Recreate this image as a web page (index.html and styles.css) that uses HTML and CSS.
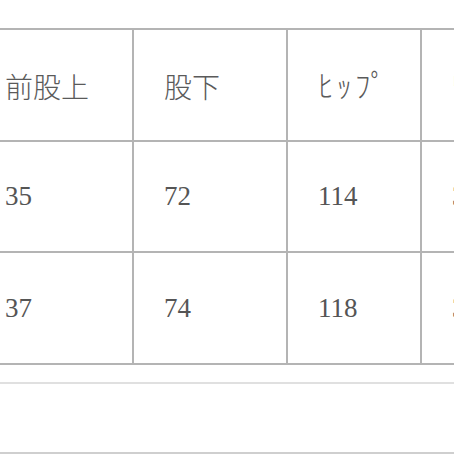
FILE: index.html
```html
<!DOCTYPE html>
<html lang="ja">
<head>
<meta charset="utf-8">
<link rel="stylesheet" href="styles.css">
</head>
<body>
<div class="page">
  <div class="grid">
    <div class="cell head">前股上</div>
    <div class="cell head">股下</div>
    <div class="cell head kana">ﾋｯﾌﾟ</div>
    <div class="cell head kana">ﾜﾀﾘ</div>
    <div class="cell num">35</div>
    <div class="cell num">72</div>
    <div class="cell num">114</div>
    <div class="cell num">33</div>
    <div class="cell num">37</div>
    <div class="cell num">74</div>
    <div class="cell num">118</div>
    <div class="cell num">34</div>
  </div>
  <div class="divider"></div>
  <div class="footer"></div>
</div>
</body>
</html>
```
FILE: styles.css
```css
html, body {
  margin: 0;
  padding: 0;
  background: #fff;
  overflow: hidden;
  width: 454px;
  height: 454px;
}
.page {
  padding-top: 28px;
  width: 454px;
  height: 454px;
  box-sizing: border-box;
  display: flex;
  flex-direction: column;
}
.grid {
  margin-left: -27px;
  width: 616px;
  box-sizing: border-box;
  display: grid;
  grid-template-columns: 157px 152px 132px 160px;
  grid-template-rows: 110px 109px 110px;
  gap: 2px;
  padding: 2px;
  background: #b4b4b4;
}
.cell {
  background: #fff;
  display: flex;
  align-items: center;
  padding-left: 30px;
  color: #5a5a5a;
}
.head {
  font-family: "Noto Sans CJK JP", sans-serif;
  font-weight: 300;
  font-size: 28px;
  padding-top: 1px;
}
.kana {
  font-size: 31px;
  letter-spacing: 3px;
  padding-bottom: 4px;
}
.num {
  font-family: "Liberation Serif", serif;
  font-size: 27px;
  color: #555;
}
.divider {
  margin-top: 17px;
  height: 2px;
  background: #e0e0e0;
}
.footer {
  flex: 1;
  border-bottom: 2px solid #cfcfcf;
}
```
